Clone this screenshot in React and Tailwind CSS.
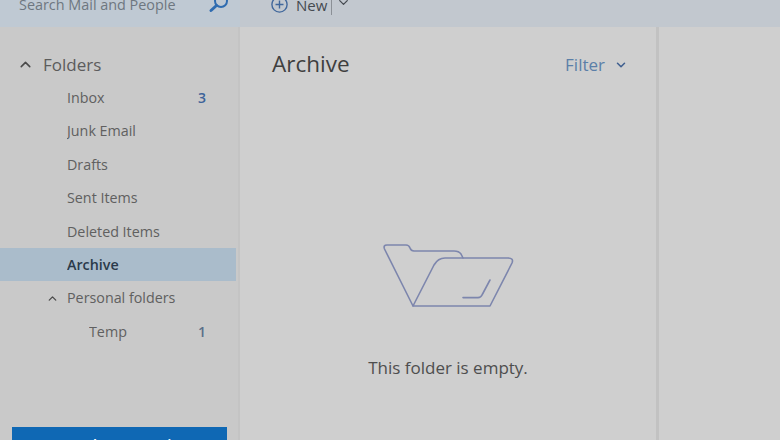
import { ChevronUp, ChevronDown } from 'lucide-react';

const folders = [
    { name: 'Inbox', count: '3', countColor: 'text-[#3d6399]' },
    { name: 'Junk Email' },
    { name: 'Drafts' },
    { name: 'Sent Items' },
    { name: 'Deleted Items' },
];

function Row({ children, count, countColor, className = '' }) {
    return (
        <div className={`flex h-[33.4px] items-center text-[14.3px] text-[#606060] ${className}`}>
            <div className="flex-1 truncate">{children}</div>
            {count && <span className={`mr-[30px] text-[14px] font-semibold ${countColor}`}>{count}</span>}
        </div>
    );
}

function EmptyFolderIcon() {
    return (
        <svg width="132" height="66" viewBox="0 0 132 66" fill="none" stroke="#7d86ad" strokeWidth="1.6" strokeLinejoin="round" strokeLinecap="round">
            <path d="M31 62 L2.5 5 Q1 1 5 1 L24 1 Q27 1 28 4 Q29 7 32 7 L72 7 Q77 7 79 10 L81 14" />
            <path d="M31 62 L52 21 Q56 14 63 14 L126 14 Q132 14 130 19 L108 62 Z" />
            <path d="M108 36 L100 51 Q99 53.6 96 53.6 L81 53.6" />
        </svg>
    );
}

export default function App() {
    return (
        <div className="flex h-[440px] w-[780px] flex-col overflow-hidden bg-[#cfcfcf] font-['Open_Sans',sans-serif]">
            {/* Barra superior */}
            <div className="flex h-[27px] shrink-0">
                <div className="flex w-[240px] items-start bg-[#bfc9d3] pl-[19px]">
                    <span className="mt-[-6px] flex-1 text-[14.4px] leading-[22px] text-[#6e7780]">Search Mail and People</span>
                    <svg className="mt-[-5px] mr-[10px]" width="22" height="20" viewBox="0 0 22 20" fill="none" stroke="#2f6cb0" strokeLinecap="round">
                        <circle cx="13" cy="6" r="6" strokeWidth="2" />
                        <path d="M8.5 10.5 L3 15.5" strokeWidth="3" />
                    </svg>
                </div>
                <div className="flex flex-1 items-start bg-[#c2c8cf] pl-[31px]">
                    <svg className="mt-[-4px]" width="17" height="17" viewBox="0 0 17 17" fill="none" stroke="#41689c" strokeWidth="1.4">
                        <circle cx="8.5" cy="8.5" r="7.6" />
                        <path d="M8.5 4.5 V12.5 M4.5 8.5 H12.5" />
                    </svg>
                    <span className="mt-[-6px] ml-[8px] text-[15px] leading-[22px] text-[#454a50]">New</span>
                    <div className="ml-[4px] mt-[-2px] h-[17px] w-px bg-[#8b9096]" />
                    <ChevronDown className="ml-[4px] mt-[-5px] text-[#454a50]" size={15} strokeWidth={2} />
                </div>
            </div>

            <div className="flex min-h-0 flex-1">
                {/* Lista de pastas */}
                <div className="flex w-[240px] shrink-0 flex-col border-r-2 border-[#c4c4c4] bg-[#c9c9c9] pr-[2px]">
                    <div className="flex h-[54px] shrink-0 items-center pl-[17px] pt-[21px] text-[17px] text-[#5c5c5c]">
                        <ChevronUp size={17} strokeWidth={2.2} className="text-[#4a4a4a]" />
                        <span className="ml-[9px]">Folders</span>
                    </div>
                    {folders.map(folder => (
                        <Row key={folder.name} count={folder.count} countColor={folder.countColor} className="pl-[67px]">
                            {folder.name}
                        </Row>
                    ))}
                    <Row className="bg-[#aabccb] pl-[67px] font-semibold !text-[#2b3a4a]">Archive</Row>
                    <Row className="pl-[46px]">
                        <span className="flex items-center">
                            <ChevronUp size={13} strokeWidth={2.4} className="mr-[8px] text-[#4a4a4a]" />
                            Personal folders
                        </span>
                    </Row>
                    <Row count="1" countColor="text-[#5a6f8a]" className="pl-[89px]">Temp</Row>
                    <div className="mt-auto mb-[-14px] ml-[12px] flex h-[27px] w-[215px] shrink-0 items-end justify-center bg-[#0f68b4] text-[15px] font-semibold leading-[20px] text-white">
                        Upgrade to Premium
                    </div>
                </div>

                {/* Painel central */}
                <div className="flex w-[419px] shrink-0 flex-col border-r-[3px] border-[#c2c2c2] bg-[#cfcfcf]">
                    <div className="flex items-center justify-between pl-[32px] pr-[28px] pt-[19px]">
                        <span className="text-[22.5px] leading-[36px] text-[#3f3f3f]">Archive</span>
                        <div className="mt-[2px] flex items-center text-[#5b7fa8]">
                            <span className="text-[17px]">Filter</span>
                            <ChevronDown size={14} strokeWidth={2.6} className="ml-[9px] text-[#3f5f8f]" />
                        </div>
                    </div>
                    <div className="mt-[162px] flex justify-center">
                        <EmptyFolderIcon />
                    </div>
                    <div className="mt-[45px] text-center text-[17px] leading-[26px] text-[#4e4e4e]">This folder is empty.</div>
                </div>

                {/* Painel de leitura */}
                <div className="flex-1 bg-[#cfcfcf]" />
            </div>
        </div>
    );
}
